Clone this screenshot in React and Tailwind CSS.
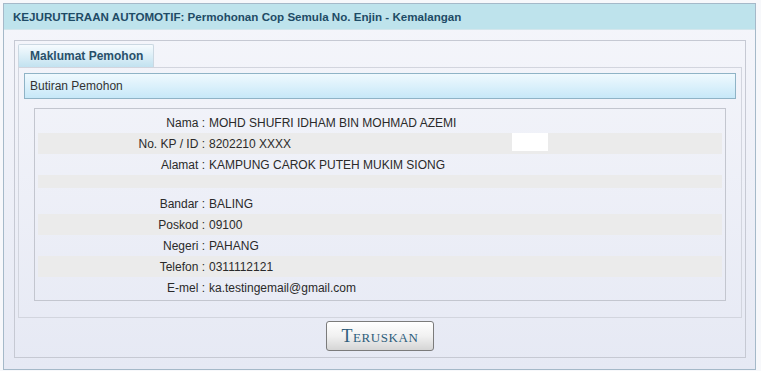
import React from 'react';

const rows = [
    { label: 'Nama', value: 'MOHD SHUFRI IDHAM BIN MOHMAD AZEMI' },
    { label: 'No. KP / ID', value: '8202210 XXXX', masked: true },
    { label: 'Alamat', value: 'KAMPUNG CAROK PUTEH MUKIM SIONG' },
    { label: '', value: '', thin: true },
    { label: 'Bandar', value: 'BALING', tall: true },
    { label: 'Poskod', value: '09100' },
    { label: 'Negeri', value: 'PAHANG' },
    { label: 'Telefon', value: '0311112121' },
    { label: 'E-mel', value: 'ka.testingemail@gmail.com' },
];

function InfoRow({ row, index }) {
    const striped = index % 2 === 1;
    const height = row.thin ? 'h-[13px]' : row.tall ? 'h-[26px] pt-[5px]' : 'h-[21px]';

    return (
        <div className={`flex items-center ${height} ${striped ? 'bg-[#ebebeb]' : ''}`}>
            {!row.thin && (
                <>
                    <div className="w-[167px] text-right whitespace-nowrap">{row.label} :</div>
                    <div className="relative flex-1 h-full flex items-center pl-[4px] whitespace-nowrap">
                        {row.value}
                        {row.masked && (
                            <div className="absolute left-[307px] top-0 w-[36px] h-[18px] bg-white" />
                        )}
                    </div>
                </>
            )}
        </div>
    );
}

export default function App() {
    return (
        <div className="w-[761px] h-[371px] bg-[#f7f8fb] pt-[3px] pl-[3px] font-['Liberation_Sans',Arial,sans-serif] text-[12px] text-[#2a2a2a]">
            <div className="w-[753px] h-[367px] border border-[#a5b9c9] bg-gradient-to-b from-[#f5f6fb] to-[#e6e9f4] flex flex-col">
                {/* Title bar */}
                <div className="h-[26px] shrink-0 bg-[#bee3ec] border-b border-[#d3e6ec] flex items-center pl-[9px] text-[11.6px] font-bold text-[#1e4b66] whitespace-nowrap">
                    KEJURUTERAAN AUTOMOTIF: Permohonan Cop Semula No. Enjin - Kemalangan
                </div>

                <div className="flex-1 pt-[10px] pl-[10px] pr-[9px] pb-[11px]">
                    <div className="h-full border border-[#c6c9d3] px-[3px] pt-[3px] flex flex-col">
                        {/* Tab */}
                        <div className="flex shrink-0">
                            <div className="w-[136px] h-[23px] border border-b-0 border-[#cbd8e2] rounded-t-[2px] bg-gradient-to-b from-[#f6fbfe] to-[#c2e2f0] flex items-center pl-[11px] font-bold text-[#29506a] whitespace-nowrap">
                                Maklumat Pemohon
                            </div>
                        </div>

                        {/* Tab content */}
                        <div className="h-[251px] shrink-0 border border-[#d2d5de] px-[5px] pt-[5px]">
                            <div className="h-[26px] border border-[#8fb3c6] bg-gradient-to-b from-[#eff9fe] to-[#c7e8f8] flex items-center pl-[5px] text-[#333]">
                                Butiran Pemohon
                            </div>

                            <div className="mx-[10px] mt-[9px] h-[193px] border border-[#c3c6cf] p-[3px]">
                                {rows.map((row, i) => (
                                    <InfoRow key={i} row={row} index={i} />
                                ))}
                            </div>
                        </div>

                        {/* Action */}
                        <div className="flex justify-center pt-[3px]">
                            <button className="w-[108px] h-[30px] border border-[#7b7b7b] rounded-[3px] bg-gradient-to-b from-[#ffffff] via-[#f1f1f1] to-[#d5d5d5] shadow-[inset_0_1px_0_#fff] font-['Liberation_Serif',serif] [font-variant:small-caps] text-[18px] leading-none tracking-[0.6px] text-[#2d5d7b]">
                                Teruskan
                            </button>
                        </div>
                    </div>
                </div>
            </div>
        </div>
    );
}
